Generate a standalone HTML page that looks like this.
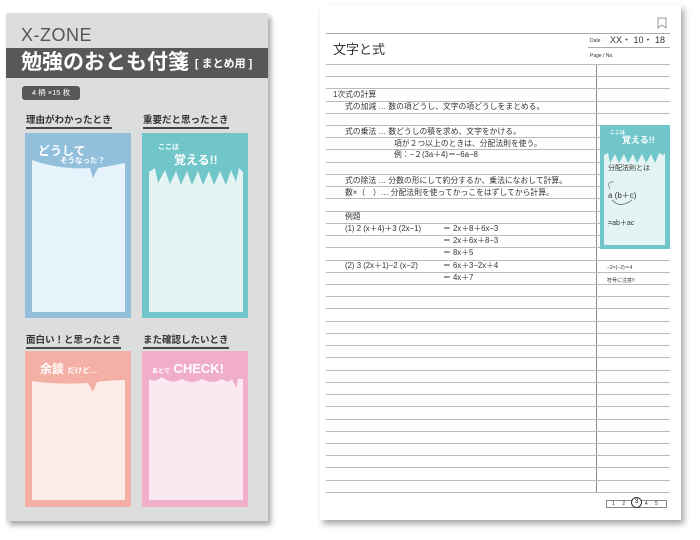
<!DOCTYPE html>
<html><head><meta charset="utf-8"><style>
*{margin:0;padding:0;box-sizing:border-box}
body{width:700px;height:540px;background:#fff;position:relative;overflow:hidden;font-family:"Liberation Sans","Noto Sans CJK JP",sans-serif}
.a{position:absolute;white-space:nowrap}
.pk{left:6px;top:13px;width:262px;height:508px;background:#dcdddd;box-shadow:3px 4px 5px rgba(0,0,0,.35)}
.lbl{font-size:9.5px;font-weight:bold;color:#333;border-bottom:2px solid #444;padding-bottom:1px;line-height:11px}
.nb{left:320px;top:5px;width:361px;height:515px;background:#fff;box-shadow:3px 4px 6px rgba(0,0,0,.35)}
.hl{position:absolute;left:326px;width:344px;height:1px;background:#bbb}
.t{position:absolute;font-size:7.8px;color:#333;white-space:nowrap;line-height:10px}
</style></head><body>
<div class="a pk"></div>
<div class="a" style="left:21px;top:25px;font-size:18px;color:#555;letter-spacing:0.5px">X-ZONE</div>
<div class="a" style="left:6px;top:48px;width:262px;height:30px;background:#595757"></div>
<div class="a" style="left:21px;top:50px;font-size:21px;color:#fff;font-weight:bold;line-height:26px">勉強のおとも付箋 <span style="font-size:11px;vertical-align:2px">[ まとめ用 ]</span></div>
<div class="a" style="left:22px;top:86px;width:58px;height:14px;background:#595757;border-radius:3px;color:#fff;font-size:7.5px;line-height:14px;text-align:center">4 柄 ×15 枚</div>
<div class="a lbl" style="left:26px;top:115px">理由がわかったとき</div>
<div class="a lbl" style="left:143px;top:115px">重要だと思ったとき</div>
<div class="a lbl" style="left:26px;top:335px">面白い！と思ったとき</div>
<div class="a lbl" style="left:143px;top:335px">また確認したいとき</div>
<svg class="a" style="left:0;top:0" width="280" height="540">
<rect x="25" y="133" width="106" height="185" fill="#92bfdc"/>
<path d="M32 160 Q60 170 90 168 L93 178 L98 168 Q115 165 125 163 L125 312 L32 312Z" fill="#e6f3fb"/>
<rect x="142" y="133" width="106" height="185" fill="#70c6c9"/>
<path d="M149 172 L155 168 L158 183 L165 170 L170 184 L176 171 L181 185 L187 171 L192 185 L198 171 L203 185 L209 171 L214 185 L220 171 L226 185 L231 170 L236 182 L239 168 L243 172 L243 312 L149 312Z" fill="#e4f3f3"/>
<rect x="25" y="351" width="106" height="156" fill="#f4b0a4"/>
<path d="M32 381 Q60 385 88 383 L93 392 L97 382 Q112 380 125 380 L125 500 L32 500Z" fill="#fdebe8"/>
<rect x="142" y="351" width="106" height="156" fill="#f0aecb"/>
<path d="M149 379 Q155 383 162 377 Q172 385 182 379 Q192 385 202 379 Q212 385 222 379 Q228 384 232 379 L236 388 L238 379 L243 379 L243 500 L149 500Z" fill="#fbe9f2"/>
</svg>
<div class="a" style="left:38px;top:142px;font-size:12px;font-weight:bold;color:#fff">どうして</div>
<div class="a" style="left:60px;top:155px;font-size:7.5px;font-weight:bold;color:#fff">そうなった？</div>
<div class="a" style="left:158px;top:142px;font-size:7px;font-weight:bold;color:#fff">ここは</div>
<div class="a" style="left:174px;top:151px;font-size:12px;font-weight:bold;color:#fff">覚える!!</div>
<div class="a" style="left:40px;top:360px;font-size:12px;font-weight:bold;color:#fff">余談 <span style="font-size:7.5px">だけど…</span></div>
<div class="a" style="left:152px;top:361px;font-size:13px;font-weight:bold;color:#fff"><span style="font-size:6px">あとで</span> CHECK!</div>

<div class="a nb"></div>
<svg class="a" style="left:656px;top:17px" width="12" height="12"><path d="M2 1H10V11L6 8L2 11Z" fill="none" stroke="#999" stroke-width="1"/></svg>
<div class="hl" style="top:33px;background:#aaa"></div>
<div class="t" style="left:333px;top:42px;font-size:13px;line-height:16px">文字と式</div>
<div class="t" style="left:590px;top:36px;font-size:5px">Date</div>
<div class="t" style="left:610px;top:35px;font-size:9px">XX・ 10・ 18</div>
<div class="a" style="left:588px;top:47px;width:82px;height:1px;background:#aaa"></div>
<div class="t" style="left:590px;top:51px;font-size:5px">Page / No.</div>
<div class="a" style="left:596px;top:64px;width:1px;height:429px;background:#888"></div>
<div id="lines"></div>
<div class="t" style="left:333px;top:90px">1次式の計算</div>
<div class="t" style="left:345px;top:102px">式の加減 … 数の項どうし、文字の項どうしをまとめる。</div>
<div class="t" style="left:345px;top:127px">式の乗法 … 数どうしの積を求め、文字をかける。</div>
<div class="t" style="left:394px;top:139px">項が２つ以上のときは、分配法則を使う。</div>
<div class="t" style="left:394px;top:150px">例：−２(3a＋4)＝−6a−8</div>
<div class="t" style="left:345px;top:176px">式の除法 … 分数の形にして約分するか、乗法になおして計算。</div>
<div class="t" style="left:345px;top:188px">数×（　）… 分配法則を使ってかっこをはずしてから計算。</div>
<div class="t" style="left:345px;top:212px">例題</div>
<div class="t" style="left:345px;top:224px">(1) 2 (x＋4)＋3 (2x−1)</div>
<div class="t" style="left:443px;top:224px">＝ 2x＋8＋6x−3</div>
<div class="t" style="left:443px;top:236px">＝ 2x＋6x＋8−3</div>
<div class="t" style="left:443px;top:248px">＝ 8x＋5</div>
<div class="t" style="left:345px;top:261px">(2) 3 (2x＋1)−2 (x−2)</div>
<div class="t" style="left:443px;top:261px">＝ 6x＋3−2x＋4</div>
<div class="t" style="left:443px;top:273px">＝ 4x＋7</div>
<div class="t" style="left:607px;top:263px;font-size:5px">−2×(−2)＝4</div>
<div class="t" style="left:607px;top:276px;font-size:5px">符号に注意!!</div>
<svg class="a" style="left:600px;top:125px" width="70" height="124">
<rect width="70" height="124" fill="#70c6c9"/>
<path d="M4 30 L8 28 L10 38 L15 29 L19 38 L24 29 L28 38 L33 29 L37 38 L42 29 L46 38 L51 29 L55 38 L59 28 L63 30 L65 28 L65 120 L4 120Z" fill="#e4f3f3"/>
<path d="M10 64 Q6 56 14 57 M12 75 Q20 84 32 75" fill="none" stroke="#555" stroke-width=".6"/>
</svg>
<div class="t" style="left:610px;top:128px;font-size:5px;color:#fff;font-weight:bold">ここは</div>
<div class="t" style="left:622px;top:135px;font-size:9px;color:#fff;font-weight:bold">覚える!!</div>
<div class="t" style="left:608px;top:164px;font-size:7px">分配法則とは</div>
<div class="t" style="left:608px;top:191px;font-size:8px">a (b＋c)</div>
<div class="t" style="left:608px;top:219px;font-size:7px">=ab＋ac</div>
<div class="a" style="left:606px;top:500px;width:61px;height:8px;border:1px solid #888;font-size:5px;line-height:6px;color:#333;text-align:center;letter-spacing:3px">1 2 　 4 5</div>
<div class="a" style="left:631px;top:497px;width:11px;height:11px;border:1px solid #333;border-radius:50%;background:#fff;font-size:6px;line-height:9px;text-align:center">3</div>
<script>
var h='';for(var k=0;k<=35;k++){var y=63.8+12.23*k;h+='<div class="hl" style="top:'+y.toFixed(1)+'px"></div>';}
document.getElementById('lines').outerHTML=h;
</script>
</body></html>
